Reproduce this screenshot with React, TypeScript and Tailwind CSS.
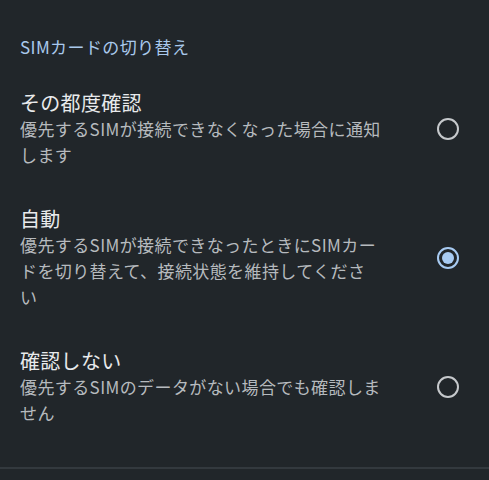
import React from "react";

const items = [
  { title: "その都度確認", lines: ["優先するSIMが接続できなくなった場合に通知", "します"], selected: false },
  {
    title: "自動",
    lines: ["優先するSIMが接続できなったときにSIMカー", "ドを切り替えて、接続状態を維持してくださ", "い"],
    selected: true,
  },
  { title: "確認しない", lines: ["優先するSIMのデータがない場合でも確認しま", "せん"], selected: false },
];

function Radio({ selected }: { selected: boolean }) {
  return (
    <svg width="24" height="24" viewBox="0 0 24 24">
      <circle cx="12" cy="12" r="10" fill="none" stroke={selected ? "#a8cbf2" : "#c6c9cc"} strokeWidth="2" />
      {selected && <circle cx="12" cy="12" r="6" fill="#a8cbf2" />}
    </svg>
  );
}

export default function App() {
  return (
    <div
      className="w-[489px] h-[480px] bg-[#21262a] overflow-hidden"
      style={{ fontFamily: '"Noto Sans CJK JP", "Noto Sans", sans-serif' }}
    >
      <div className="pl-[20px] pt-[35px] pb-[12px] text-[17px] tracking-[0.4px] leading-[24px] text-[#a9c9ec]">
        SIMカードの切り替え
      </div>
      {items.map((it) => (
        <div key={it.title} className="flex items-center py-[19px] pl-[20px]">
          <div className="w-[380px] whitespace-nowrap">
            <div className="text-[20px] tracking-[0.3px] leading-[26px] text-[#e8eaec]">{it.title}</div>
            {it.lines.map((l) => (
              <div key={l} className="text-[17px] tracking-[0.4px] leading-[26px] text-[#b6babe]">
                {l}
              </div>
            ))}
          </div>
          <div className="ml-auto mr-[29px] flex">
            <Radio selected={it.selected} />
          </div>
        </div>
      ))}
      <div className="mt-[22px] h-[2px] bg-[#33393e]" />
    </div>
  );
}
